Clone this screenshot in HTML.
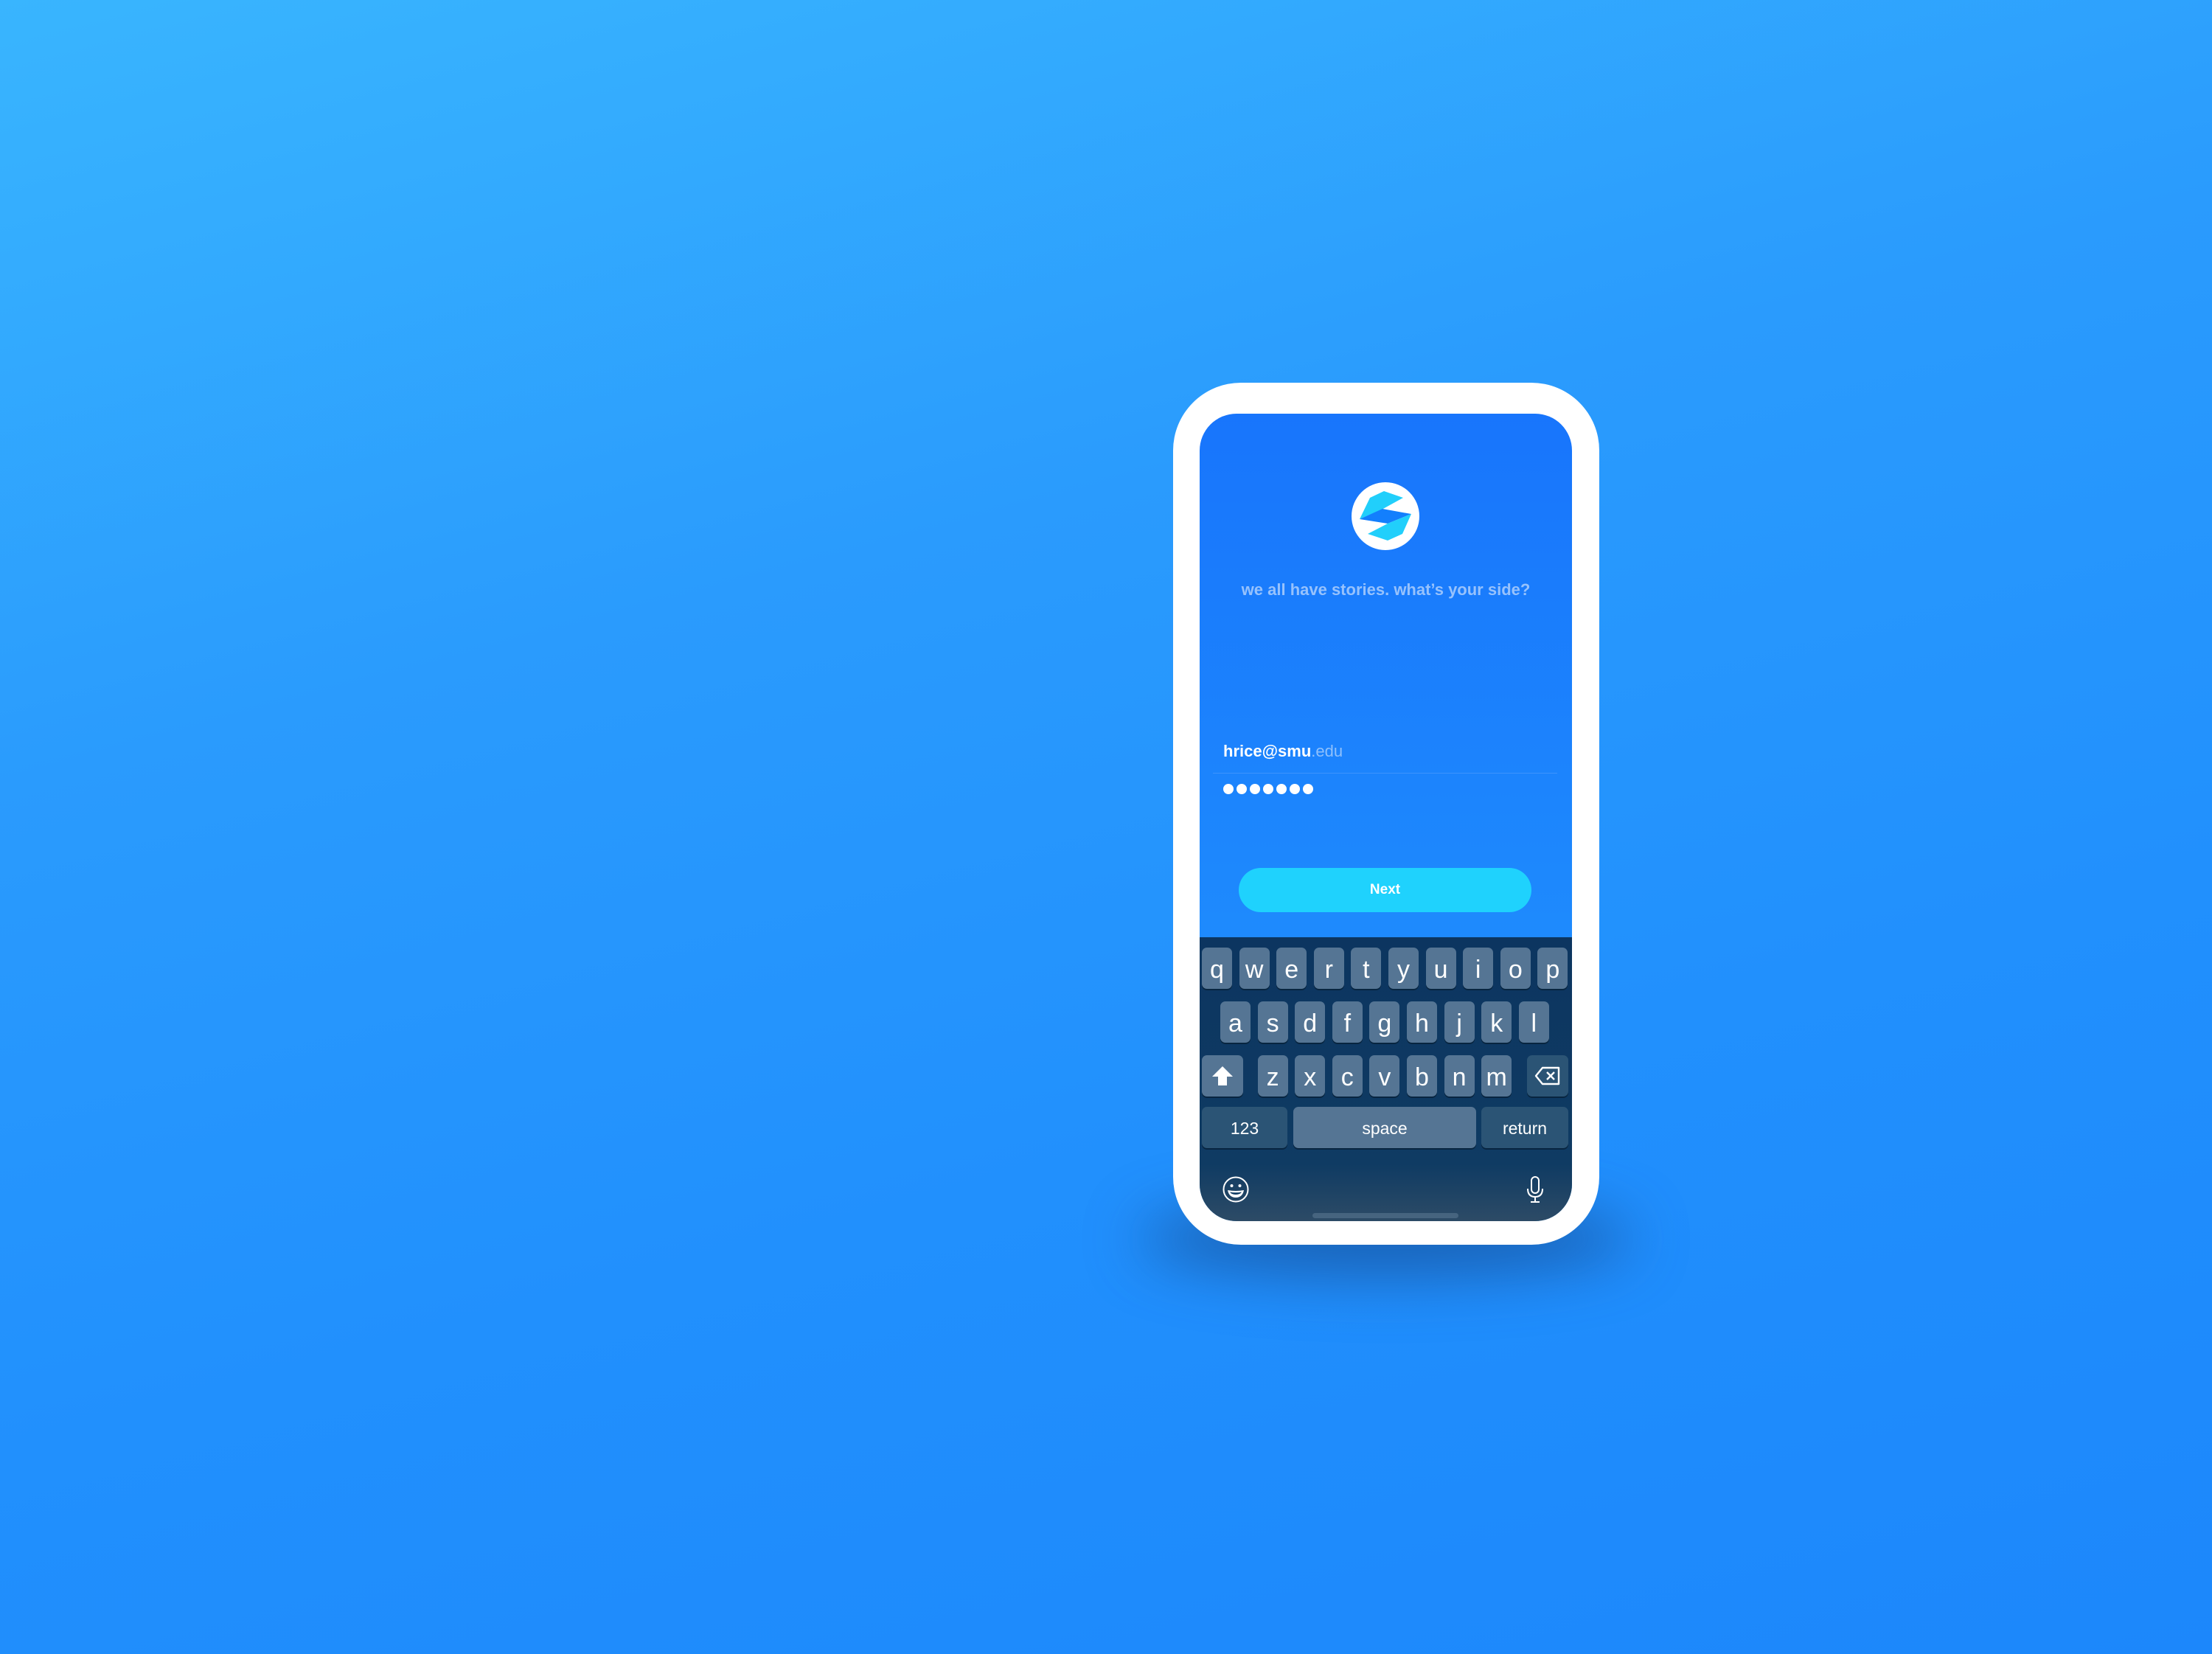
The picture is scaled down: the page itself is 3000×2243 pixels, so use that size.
<!DOCTYPE html>
<html><head><meta charset="utf-8"><style>
*{margin:0;padding:0;box-sizing:border-box}
html,body{width:3000px;height:2243px;overflow:hidden}
body{background:linear-gradient(165deg,#39b5fe 0%,#2a9bfd 35%,#2190fd 65%,#1c87fb 100%);position:relative;font-family:"Liberation Sans",sans-serif}
.shadow{position:absolute;left:1545px;top:1630px;width:670px;height:100px;border-radius:50%;background:rgba(20,60,120,.55);filter:blur(40px)}
.phone{position:absolute;left:1591px;top:519px;width:578px;height:1169px;border-radius:92px;background:#fff}
.screen{position:absolute;left:1627px;top:561px;width:505px;height:1095px;border-radius:50px;overflow:hidden;background:linear-gradient(180deg,#1875fc 0%,#2196fe 100%)}
.abs{position:absolute}
.tag{left:0;width:505px;top:786px;text-align:center;color:#97c2fc;font-weight:bold;font-size:22px}
.kb{left:0;top:710px;width:505px;height:385px;background:linear-gradient(180deg,#0c3560 0%,#0f3b63 80%,#2d4b66 100%)}
.key{position:absolute;width:41px;height:56px;border-radius:7px;background:#557594;color:#fff;font-size:34px;text-align:center;line-height:60px;box-shadow:0 2px 0 #082540}
.dk{background:#2b5475}
.sm{font-size:23px;line-height:58px}
</style></head><body>
<div class="shadow"></div>
<div class="phone"></div>
<div class="screen">
<svg class="abs" style="left:204px;top:91px" width="96" height="96" viewBox="-48 -48 96 96">
<circle r="46" fill="#fff"/>
<polygon points="-35,4 -21,-25 -2,-34 24,-25 -5,-9" fill="#21cffb"/>
<polygon points="-35,4 -4,-10 35,-3 3,10" fill="#137ffd"/>
<polygon points="35,-3 23,24 3,33 -24,24 3,10" fill="#21cffb"/>
</svg>
<div class="abs tag" style="top:226px">we all have stories. what’s your side?</div>
<div class="abs" style="left:32px;top:445px;color:#fff;font-size:22px;font-weight:bold">hrice@smu<span style="color:#8fc0fc;font-weight:normal">.edu</span></div>
<div class="abs" style="left:18px;top:487px;width:467px;height:1px;background:#3d93fd"></div>
<svg class="abs" style="left:32px;top:502px" width="130" height="16"><g fill="#fff"><circle cx="7" cy="7" r="7"/><circle cx="25" cy="7" r="7"/><circle cx="43" cy="7" r="7"/><circle cx="61" cy="7" r="7"/><circle cx="79" cy="7" r="7"/><circle cx="97" cy="7" r="7"/><circle cx="115" cy="7" r="7"/></g></svg>
<div class="abs" style="left:53px;top:616px;width:397px;height:60px;border-radius:30px;background:#1fd2fd;color:#fff;font-weight:bold;font-size:19px;text-align:center;line-height:60px">Next</div>
<div class="abs kb">
<div class="key" style="left:3px;top:14px">q</div><div class="key" style="left:53.6px;top:14px">w</div><div class="key" style="left:104.2px;top:14px">e</div><div class="key" style="left:154.8px;top:14px">r</div><div class="key" style="left:205.4px;top:14px">t</div><div class="key" style="left:256px;top:14px">y</div><div class="key" style="left:306.6px;top:14px">u</div><div class="key" style="left:357.2px;top:14px">i</div><div class="key" style="left:407.8px;top:14px">o</div><div class="key" style="left:458.4px;top:14px">p</div>
<div class="key" style="left:28px;top:87px">a</div><div class="key" style="left:78.6px;top:87px">s</div><div class="key" style="left:129.2px;top:87px">d</div><div class="key" style="left:179.8px;top:87px">f</div><div class="key" style="left:230.4px;top:87px">g</div><div class="key" style="left:281px;top:87px">h</div><div class="key" style="left:331.6px;top:87px">j</div><div class="key" style="left:382.2px;top:87px">k</div><div class="key" style="left:432.8px;top:87px">l</div>
<div class="key" style="left:3px;top:160px;width:56px;line-height:normal"><svg width="30" height="30" viewBox="0 0 30 30" style="margin-top:13px"><polygon points="15,2 29,16 21,16 21,28 9,28 9,16 1,16" fill="#fff"/></svg></div>
<div class="key" style="left:78.6px;top:160px">z</div><div class="key" style="left:129.2px;top:160px">x</div><div class="key" style="left:179.8px;top:160px">c</div><div class="key" style="left:230.4px;top:160px">v</div><div class="key" style="left:281px;top:160px">b</div><div class="key" style="left:331.6px;top:160px">n</div><div class="key" style="left:382.2px;top:160px">m</div>
<div class="key dk" style="left:444px;top:160px;width:56px;line-height:normal"><svg width="36" height="26" viewBox="0 0 36 26" style="margin-top:15px"><path d="M11 2H33V24H11L2 13Z" fill="none" stroke="#fff" stroke-width="2.4" stroke-linejoin="round"/><path d="M17 8L27 18M27 8L17 18" stroke="#fff" stroke-width="2.4"/></svg></div>
<div class="key dk sm" style="left:3px;top:230px;width:116px">123</div>
<div class="key sm" style="left:127px;top:230px;width:248px">space</div>
<div class="key dk sm" style="left:382px;top:230px;width:118px">return</div>
<svg class="abs" style="left:31px;top:324px" width="36" height="36" viewBox="0 0 36 36"><circle cx="18" cy="18" r="16.5" fill="none" stroke="#fff" stroke-width="2"/><circle cx="12.5" cy="13" r="2" fill="#fff"/><circle cx="23.5" cy="13" r="2" fill="#fff"/><path d="M7 19Q18 21 29 19Q27 29 18 29Q9 29 7 19Z" fill="#fff"/><path d="M10 21.5Q18 23 26 21.5Q24 25 18 25Q12 25 10 21.5Z" fill="#0f3b63"/></svg>
<svg class="abs" style="left:443px;top:324px" width="24" height="38" viewBox="0 0 24 38"><rect x="7" y="1" width="10" height="22" rx="5" fill="none" stroke="#fff" stroke-width="2"/><path d="M2 17Q2 28 12 28Q22 28 22 17M12 28V35M6 35H18" fill="none" stroke="#fff" stroke-width="2"/></svg>
<div class="abs" style="left:153px;top:374px;width:198px;height:7px;border-radius:4px;background:#46647f"></div>
</div>
</div>
</body></html>
